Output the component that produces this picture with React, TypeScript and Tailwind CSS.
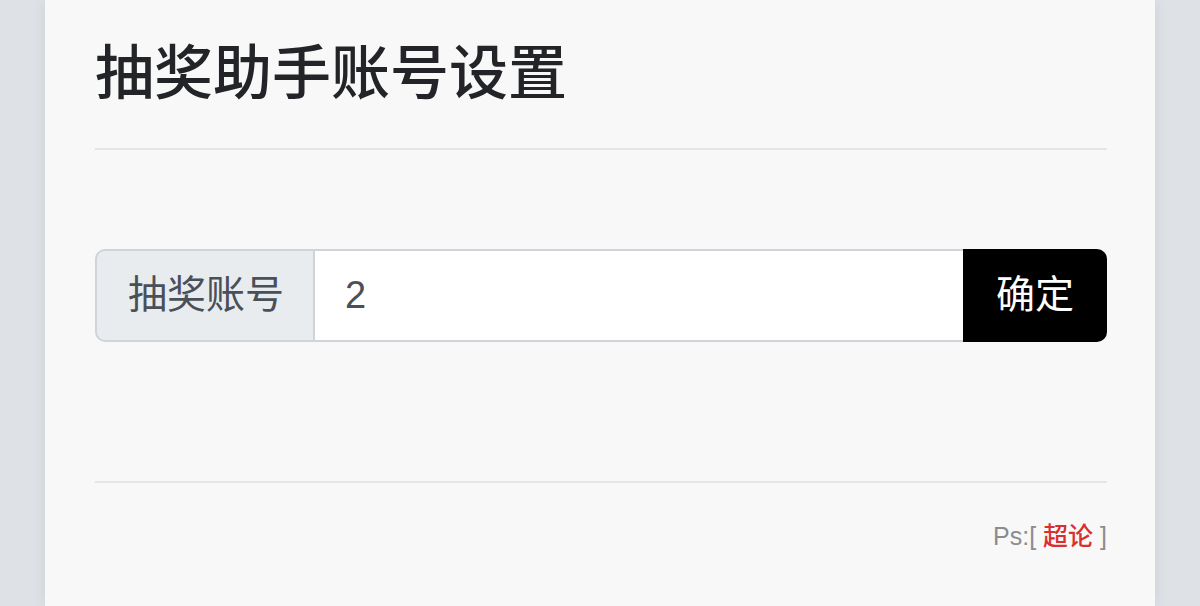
export default function App() {
  return (
    <div className="min-h-screen bg-[#dee1e5] flex justify-center overflow-hidden [font-family:'Liberation_Sans','Noto_Sans_CJK_SC',sans-serif]">
      <div className="w-[1110px] h-[606px] bg-[#f8f8f9] pl-[50px] pr-[48px] pt-[39px] shadow-[0_0_14px_rgba(0,0,0,0.08)]">
        <h1 className="text-[59px] leading-[70px] font-medium text-[#222428]">抽奖助手账号设置</h1>
        <div className="mt-[39px] border-t-2 border-[#e4e5e7]" />

        <div className="mt-[99px] flex h-[93px]">
          <span className="flex items-center shrink-0 whitespace-nowrap w-[220px] pl-[31px] bg-[#e9ecef] border-2 border-[#ced4da] rounded-l-[10px] text-[39px] text-[#495057]">
            抽奖账号
          </span>
          <input
            defaultValue="2"
            className="flex-1 min-w-0 bg-white border-y-2 border-[#ced4da] px-[30px] text-[38px] text-[#495057] outline-none"
          />
          <button className="shrink-0 w-[144px] bg-black text-white text-[39px] rounded-r-[10px]">确定</button>
        </div>

        <div className="mt-[139px] border-t-2 border-[#e4e5e7]" />
        <p className="mt-[35px] text-right text-[25px] leading-[36px] text-[#8c8c8c]">
          Ps:[ <span className="text-[#d9302f] font-medium">超论</span> ]
        </p>
      </div>
    </div>
  );
}
